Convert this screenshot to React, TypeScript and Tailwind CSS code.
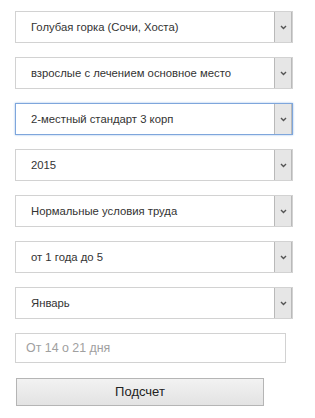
import React from 'react';

const options = [
  'Голубая горка (Сочи, Хоста)',
  'взрослые с лечением основное место',
  '2-местный стандарт 3 корп',
  '2015',
  'Нормальные условия труда',
  'от 1 года до 5',
  'Январь',
];

function FakeSelect({ label, focused }: { label: string; focused?: boolean }) {
  return (
    <div
      className={`flex h-[32px] w-[278px] items-stretch bg-white ${
        focused
          ? 'border border-[#7ea6dc] shadow-[0_0_2px_#9dbfe9]'
          : 'border border-[#d2d2d2]'
      }`}
    >
      <div className="flex flex-1 items-center pl-[15px] text-[11.3px] text-[#333] whitespace-nowrap">
        {label}
      </div>
      <div className="flex w-[18px] items-center justify-center border-l border-r border-[#b9b9b9] bg-[#e6e6e6]">
        <svg width="7" height="5" viewBox="0 0 7 5">
          <path d="M1 1 L3.5 3.5 L6 1" fill="none" stroke="#555" strokeWidth="1.4" />
        </svg>
      </div>
    </div>
  );
}

export default function App() {
  return (
    <div
      className="min-h-screen bg-white pl-[15px] pt-[11px]"
      style={{ fontFamily: '"Liberation Sans", Arial, sans-serif' }}
    >
      <div className="flex flex-col gap-[14px]">
        {options.map((o, i) => (
          <FakeSelect key={o} label={o} focused={i === 2} />
        ))}
        <div className="flex h-[30px] w-[271px] items-center border border-[#d2d2d2] bg-white pl-[10px] text-[12.4px] text-[#a0a0a0]">
          От 14 о 21 дня
        </div>
        <button className="mt-[1px] ml-[1px] h-[28px] w-[248px] border border-[#b5b5b5] bg-gradient-to-b from-[#f2f2f2] to-[#e3e3e3] text-[13px] text-[#222]">
          Подсчет
        </button>
      </div>
    </div>
  );
}
